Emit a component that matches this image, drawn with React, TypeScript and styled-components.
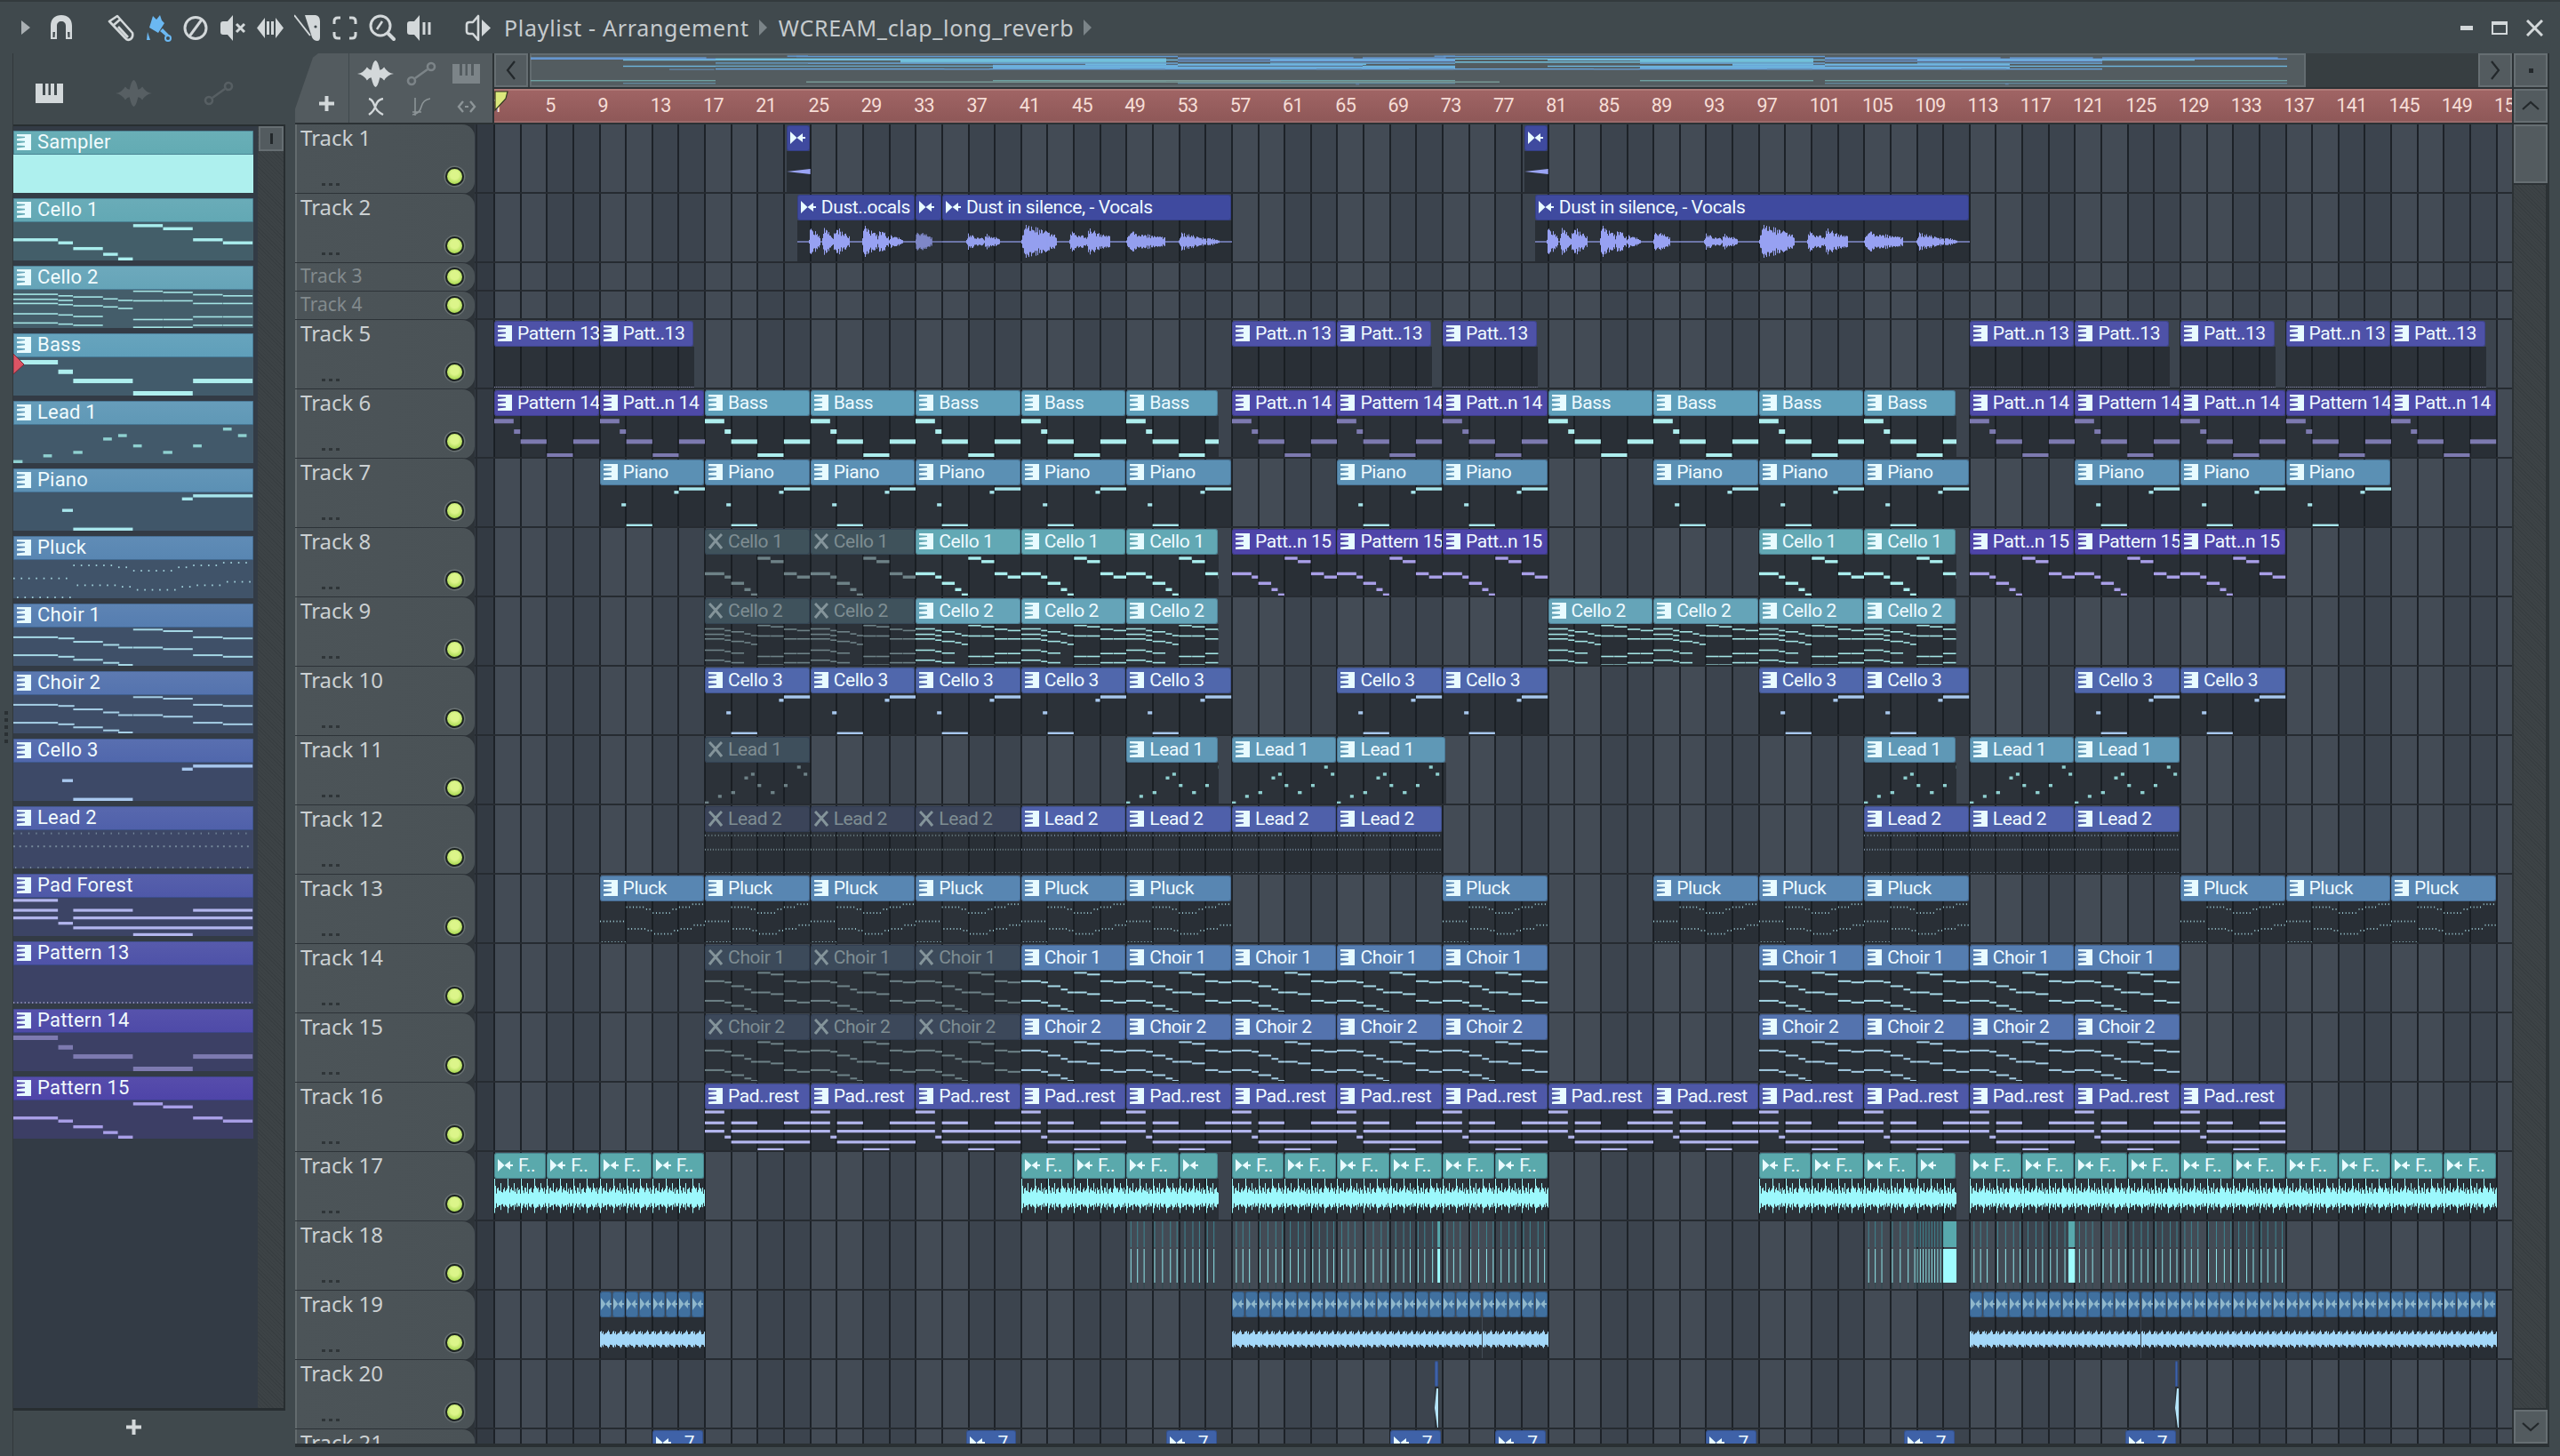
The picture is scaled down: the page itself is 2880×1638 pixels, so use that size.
import React from "react";
import styled, { createGlobalStyle } from "styled-components";

const BAR = 14.82;
const LANE_PAD = 22;
const barX = (i: number) => LANE_PAD + i * BAR;

type Note = [number, number, number];
type Pattern = { h: number; color: string; notes: Note[] };

const dots = (from: number, to: number, y: number, step = 0.25, w = 0.06): Note[] => {
  const out: Note[] = [];
  for (let x = from; x < to - 0.001; x += step) out.push([x, w, y]);
  return out;
};

const choir: Note[] = [
  [0, 1.5, 0.23], [1.5, 0.55, 0.26], [2, 1, 0.35], [3, 0.55, 0.43], [3.5, 0.5, 0.5], [4, 1, 0.03], [5, 1, 0.07], [6, 1, 0.23], [7, 1, 0.26],
  [0, 1.5, 0.7], [1.5, 0.55, 0.74], [2, 1, 0.82], [3, 0.55, 0.9], [3.5, 0.5, 0.98], [4, 1, 0.5], [5, 1, 0.54], [6, 1, 0.7], [7, 1, 0.74],
];
const cello1: Note[] = [
  [0, 1.5, 0.42], [1.5, 0.5, 0.5], [2, 1, 0.65], [3, 0.5, 0.8], [3.5, 0.5, 0.95], [4, 1, 0.05], [5, 1, 0.13], [6, 1, 0.42], [7, 1, 0.5],
];
const bass: Note[] = [[0, 1.5, 0.07], [1.5, 0.5, 0.32], [2, 2, 0.56], [4, 2, 0.93], [6, 2, 0.56]];
const keys: Note[] = [[1.63, 0.37, 0.43], [2, 2, 0.95], [5.63, 0.37, 0.13], [6, 2, 0.05]];

const PATTERNS: Record<string, Pattern> = {
  Sampler: { h: 0, color: "#aeeeee", notes: [] },
  "Cello 1": { h: 3.4, color: "#aaeeee", notes: cello1 },
  "Cello 2": {
    h: 1.6,
    color: "#a4e4e4",
    notes: [
      [0, 1.5, 0.1], [0, 1.5, 0.23], [0, 1.5, 0.34], [0, 1.5, 0.61], [0, 1.5, 0.85],
      [1.5, 0.5, 0.14], [1.5, 0.5, 0.26], [1.5, 0.5, 0.37], [1.5, 0.5, 0.64], [1.5, 0.5, 0.88],
      [2, 1, 0.17], [2, 1, 0.4], [2, 1, 0.68], [2, 1, 0.91],
      [3, 0.5, 0.22], [3, 0.5, 0.43], [3.5, 0.5, 0.26], [3.5, 0.5, 0.47],
      [4, 1, 0.02], [4, 1, 0.27], [4, 1, 0.76], [4, 1, 0.98],
      [5, 1, 0.05], [5, 1, 0.27], [5, 1, 0.76], [5, 1, 0.98],
      [6, 1, 0.11], [6, 1, 0.34], [6, 1, 0.69], [6, 1, 0.91],
      [7, 1, 0.14], [7, 1, 0.34], [7, 1, 0.69], [7, 1, 0.91],
    ],
  },
  Bass: { h: 5, color: "#aeeeee", notes: bass },
  "Lead 1": {
    h: 3.4,
    color: "#8fd0d0",
    notes: [
      [0, 0.32, 0.94], [1, 0.3, 0.77], [2, 0.32, 0.68], [3, 0.3, 0.33], [3.5, 0.3, 0.24], [4, 0.3, 0.51], [5, 0.32, 0.68], [6, 0.3, 0.51], [7, 0.3, 0.07], [7.5, 0.3, 0.24],
    ],
  },
  Piano: { h: 3.4, color: "#a8e6ec", notes: keys },
  Pluck: {
    h: 1.8,
    color: "#a3d2dc",
    notes: [
      ...dots(0, 1.9, 0.46), ...dots(0.12, 2, 0.96),
      ...dots(2, 3.4, 0.12), ...dots(3.5, 4, 0.17), ...dots(4, 5.3, 0.26), ...dots(5.5, 6, 0.17), ...dots(6, 6.9, 0.12), ...dots(7, 7.9, 0.05),
      ...dots(2.12, 3.5, 0.64), ...dots(3.62, 4.1, 0.68), ...dots(4.12, 5.5, 0.76), ...dots(5.62, 6.1, 0.68), ...dots(6.12, 7, 0.64), ...dots(7.12, 8, 0.55),
    ],
  },
  "Choir 1": { h: 2, color: "#a6d8e6", notes: choir },
  "Choir 2": { h: 2, color: "#a6cfe6", notes: choir },
  "Cello 3": { h: 3.4, color: "#a8c8ee", notes: keys },
  "Lead 2": {
    h: 2,
    color: "#75889a",
    notes: [...dots(0, 8, 0.06, 0.25, 0.05), ...dots(0, 8, 0.4, 0.2, 0.07), ...dots(0.06, 8, 0.96, 0.25, 0.05)],
  },
  "Pad Forest": {
    h: 3.2,
    color: "#b3b6ee",
    notes: [
      [0, 1.5, 0.03], [0, 1.5, 0.29], [2, 2, 0.29], [6, 2, 0.29], [0, 1.5, 0.49], [2, 6, 0.49], [1.5, 0.5, 0.63], [2, 6, 0.75], [4, 2, 0.95],
    ],
  },
  "Pattern 13": { h: 2, color: "#8f90b4", notes: dots(0, 8, 0.97, 0.125, 0.05) },
  "Pattern 14": { h: 5, color: "#7d7ab0", notes: bass },
  "Pattern 15": { h: 3.4, color: "#a99fe8", notes: cello1 },
};

const CHANNELS: [string, string][] = [
  ["Sampler", "#62abb3"],
  ["Cello 1", "#62a8b4"],
  ["Cello 2", "#65a4b8"],
  ["Bass", "#5f9fba"],
  ["Lead 1", "#5f98b6"],
  ["Piano", "#5b90b4"],
  ["Pluck", "#5886b2"],
  ["Choir 1", "#557db0"],
  ["Choir 2", "#5473ae"],
  ["Cello 3", "#5067ac"],
  ["Lead 2", "#4f60aa"],
  ["Pad Forest", "#4e58a8"],
  ["Pattern 13", "#4e52a8"],
  ["Pattern 14", "#4e4aa8"],
  ["Pattern 15", "#4e44a8"],
];
const colorOf = (name: string) => CHANNELS.find((c) => c[0] === name)?.[1] ?? "#4e52a8";

const mix = (a: string, b: string, t: number) => {
  const pa = [1, 3, 5].map((i) => parseInt(a.slice(i, i + 2), 16));
  const pb = [1, 3, 5].map((i) => parseInt(b.slice(i, i + 2), 16));
  return `rgb(${pa.map((v, i) => Math.round(v + (pb[i] - v) * t)).join(",")})`;
};

type Kind = "pattern" | "dust" | "blip" | "fx" | "hat" | "tick" | "seven";
type ClipData = { start: number; len: number; label: string; color: string; pattern?: string; muted?: boolean; kind: Kind };
type Spot = number | [number, number];

const row = (label: string, pattern: string, spots: Spot[], muted = false): ClipData[] =>
  spots.map((s) => ({
    start: Array.isArray(s) ? s[0] : s,
    len: Array.isArray(s) ? s[1] : 8,
    label,
    pattern,
    color: colorOf(pattern),
    muted,
    kind: "pattern" as Kind,
  }));

const audio = (kind: Kind, label: string, color: string, spots: [number, number][]): ClipData[] =>
  spots.map(([start, len]) => ({ start, len, label, color, kind }));

const span = (from: number, n: number, step: number, len = step): [number, number][] =>
  Array.from({ length: n }, (_, i) => [from + i * step, len] as [number, number]);

const AUDIO_BLUE = "#3f4a9f";
const FX = "#5aa9ac";

type Track = { name: string; small?: boolean; clips: ClipData[]; hits?: boolean };

const t = (n: number, clips: ClipData[] = [], extra: Partial<Track> = {}): Track => ({ name: `Track ${n}`, clips, ...extra });

const TRACKS: Track[] = [
  t(1, audio("blip", "", AUDIO_BLUE, [[22.2, 1.8], [78.2, 1.8]])),
  t(2, [
    { start: 23, len: 9, label: "Dust..ocals", color: AUDIO_BLUE, kind: "dust" },
    { start: 32, len: 2, label: "", color: AUDIO_BLUE, kind: "dust" },
    { start: 34, len: 22, label: "Dust in silence, - Vocals", color: AUDIO_BLUE, kind: "dust" },
    { start: 79, len: 33, label: "Dust in silence, - Vocals", color: AUDIO_BLUE, kind: "dust" },
  ]),
  t(3, [], { small: true }),
  t(4, [], { small: true }),
  t(5, [
    ...row("Pattern 13", "Pattern 13", [0]),
    ...row("Patt..13", "Pattern 13", [[8, 7.2]]),
    ...row("Patt..n 13", "Pattern 13", [56]),
    ...row("Patt..13", "Pattern 13", [[64, 7.2], [72, 7.2]]),
    ...row("Patt..n 13", "Pattern 13", [112]),
    ...row("Patt..13", "Pattern 13", [[120, 7.2], [128, 7.2]]),
    ...row("Patt..n 13", "Pattern 13", [136]),
    ...row("Patt..13", "Pattern 13", [[144, 7.2]]),
  ]),
  t(6, [
    ...row("Pattern 14", "Pattern 14", [0]),
    ...row("Patt..n 14", "Pattern 14", [8]),
    ...row("Bass", "Bass", [16, 24, 32, 40, [48, 7]]),
    ...row("Patt..n 14", "Pattern 14", [56]),
    ...row("Pattern 14", "Pattern 14", [64]),
    ...row("Patt..n 14", "Pattern 14", [72]),
    ...row("Bass", "Bass", [80, 88, 96, [104, 7]]),
    ...row("Patt..n 14", "Pattern 14", [112]),
    ...row("Pattern 14", "Pattern 14", [120]),
    ...row("Patt..n 14", "Pattern 14", [128]),
    ...row("Pattern 14", "Pattern 14", [136]),
    ...row("Patt..n 14", "Pattern 14", [144]),
  ]),
  t(7, row("Piano", "Piano", [8, 16, 24, 32, 40, 48, 64, 72, 88, 96, 104, 120, 128, 136])),
  t(8, [
    ...row("Cello 1", "Cello 1", [16, 24], true),
    ...row("Cello 1", "Cello 1", [32, 40, [48, 7]]),
    ...row("Patt..n 15", "Pattern 15", [56]),
    ...row("Pattern 15", "Pattern 15", [64]),
    ...row("Patt..n 15", "Pattern 15", [72]),
    ...row("Cello 1", "Cello 1", [96, [104, 7]]),
    ...row("Patt..n 15", "Pattern 15", [112]),
    ...row("Pattern 15", "Pattern 15", [120]),
    ...row("Patt..n 15", "Pattern 15", [128]),
  ]),
  t(9, [
    ...row("Cello 2", "Cello 2", [16, 24], true),
    ...row("Cello 2", "Cello 2", [32, 40, [48, 7], 80, 88, 96, [104, 7]]),
  ]),
  t(10, row("Cello 3", "Cello 3", [16, 24, 32, 40, 48, 64, 72, 96, 104, 120, 128])),
  t(11, [
    ...row("Lead 1", "Lead 1", [16], true),
    ...row("Lead 1", "Lead 1", [[48, 7], 56, [64, 8.3], [104, 7], 112, 120]),
  ]),
  t(12, [
    ...row("Lead 2", "Lead 2", [16, 24, 32], true),
    ...row("Lead 2", "Lead 2", [40, 48, 56, 64, 104, 112, 120]),
  ]),
  t(13, row("Pluck", "Pluck", [8, 16, 24, 32, 40, 48, 72, 88, 96, 104, 128, 136, 144])),
  t(14, [
    ...row("Choir 1", "Choir 1", [16, 24, 32], true),
    ...row("Choir 1", "Choir 1", [40, 48, 56, 64, 72, 96, 104, 112, 120]),
  ]),
  t(15, [
    ...row("Choir 2", "Choir 2", [16, 24, 32], true),
    ...row("Choir 2", "Choir 2", [40, 48, 56, 64, 72, 96, 104, 112, 120]),
  ]),
  t(16, row("Pad..rest", "Pad Forest", span(16, 15, 8).map((s) => s[0]))),
  t(17, [
    ...audio("fx", "F..", FX, span(0, 4, 4)),
    ...audio("fx", "F..", FX, span(40, 3, 4)),
    ...audio("fx", "", FX, [[52, 3]]),
    ...audio("fx", "F..", FX, span(56, 6, 4)),
    ...audio("fx", "F..", FX, span(96, 3, 4)),
    ...audio("fx", "", FX, [[108, 3]]),
    ...audio("fx", "F..", FX, span(112, 10, 4)),
  ]),
  t(18, [], { hits: true }),
  t(19, [
    ...audio("hat", "", "#40709f", span(8, 8, 1)),
    ...audio("hat", "", "#40709f", span(56, 24, 1)),
    ...audio("hat", "", "#40709f", span(112, 40, 1)),
  ]),
  t(20, audio("tick", "", "#3f62a8", [[71.4, 0.3], [127.6, 0.3]])),
  t(21, audio("seven", "7", "#3f62a8", [[12, 3.9], [35.8, 3.9], [51, 3.9], [68, 3.9], [76, 3.9], [92, 3.9], [107, 3.9], [123.8, 3.9]])),
];

// waveforms are generated once per shape and reused
const rand = (seed: number) => () => (seed = (seed * 16807) % 2147483647) / 2147483647;

const bands = (w: number, seed: number, fn: (x: number, r: number) => [number, number]) => {
  const r = rand(seed);
  r();
  let d = "";
  for (let x = 0; x < w; x += 1) {
    const [up, down] = fn(x, r());
    d += `M${x + 0.5} ${(-up).toFixed(1)}V${down.toFixed(1)}`;
  }
  return d;
};

const BLOBS: [number, number, number][] = [
  [13, 26, 17], [28, 40, 18], [40, 59, 17], [73, 90, 19], [90, 103, 15], [103, 119, 8], [133, 152, 13], [190, 210, 9], [210, 228, 9], [252, 292, 20], [306, 325, 13], [325, 352, 15], [370, 414, 12], [429, 460, 10], [460, 475, 5],
];
const dustWave = bands(489, 77, (x, r) => {
  const b = BLOBS.find((s) => x >= s[0] && x < s[1]);
  if (!b) return [0.6, 0.6];
  const p = (x - b[0]) / (b[1] - b[0]);
  const a = b[2] * Math.min(1, p * 8 + 0.2) * (1 - p * 0.65) * (0.55 + r * 0.6);
  return [a, a * 0.95];
});
const fxWave = bands(60, 11, (x, r) => {
  const m = x % 15;
  const spike = m === 0 ? 23 : m === 1 ? 15 : m === 7 ? 18 : m === 4 || m === 11 ? 13 : 0;
  const core = 6 + r * 7;
  return [Math.max(core, spike), Math.max(core * 0.75, spike * 0.68)];
});
const hatWave = bands(16, 5, (_x, r) => [5 + r * 6, 5 + r * 5]);

const GlobalStyle = createGlobalStyle`
  html, body { margin: 0; padding: 0; background: #40494d; }
  body { font-family: "Noto Sans", sans-serif; overflow: hidden; }
`;

const Page = styled.div`
  width: 2880px;
  height: 1638px;
  display: flex;
  flex-direction: column;
  background: #40494d;
  border-top: 2px solid #333a3d;
  box-sizing: border-box;
  overflow: hidden;
`;

const Toolbar = styled.div`
  height: 58px;
  flex: none;
  display: flex;
  align-items: center;
  padding-left: 22px;
  color: #d3d8da;
`;

const ToolGroup = styled.div<{ $ml: number }>`
  display: flex;
  align-items: center;
  gap: 12px;
  margin-left: ${(p) => p.$ml}px;
`;

const Tool = styled.svg`
  width: 30px;
  height: 31px;
  flex: none;
  display: block;
`;

const Title = styled.span`
  color: #c6cbce;
  font-size: 25px;
  letter-spacing: 0.7px;
  white-space: nowrap;
`;

const TitleArrow = styled.span`
  width: 0;
  height: 0;
  margin: 0 13px 0 11px;
  border-left: 9px solid #7b8488;
  border-top: 9px solid transparent;
  border-bottom: 9px solid transparent;
`;

const WindowButtons = styled.div`
  margin-left: auto;
  margin-right: 19px;
  display: flex;
  align-items: center;
  gap: 21px;
`;

const Body = styled.div`
  flex: 1;
  display: flex;
  min-height: 0;
  padding-bottom: 10px;
`;

const Strip = styled.div`
  width: 15px;
  flex: none;
  border-right: 1px solid #31383b;
  margin-bottom: -10px;
  display: flex;
  flex-direction: column;
  align-items: center;
  justify-content: center;
  gap: 4px;
  padding-bottom: 62px;
  box-sizing: border-box;
`;

const StripDot = styled.i`
  width: 4px;
  height: 4px;
  background: #2a3033;
`;

const ChannelCol = styled.div`
  width: 306px;
  flex: none;
  display: flex;
  flex-direction: column;
  margin-bottom: -10px;
`;

const ChannelTabs = styled.div`
  height: 80px;
  flex: none;
  display: flex;
  align-items: center;
  justify-content: space-between;
  padding: 20px 58px 10px 25px;
  box-sizing: border-box;
`;

const ListFrame = styled.div`
  height: 1447px;
  flex: none;
  display: flex;
  background: #333b45;
  border-top: 2px solid #282e31;
  border-bottom: 3px solid #282e31;
  border-right: 2px solid #282e31;
  box-sizing: border-box;
`;

const List = styled.div`
  width: 275px;
  flex: none;
  padding-top: 5px;
  position: relative;
`;

const Channel = styled.div`
  width: 270px;
  height: 70px;
  margin-bottom: 6px;
  display: flex;
  flex-direction: column;
`;

const ChannelHead = styled.div<{ $c: string }>`
  height: 27px;
  flex: none;
  display: flex;
  align-items: center;
  gap: 7px;
  padding: 0 0 2px 4px;
  box-sizing: border-box;
  color: #f1fbfd;
  font-family: Roboto, sans-serif;
  font-size: 22px;
  letter-spacing: 0.2px;
  background: linear-gradient(${(p) => mix(p.$c, "#ffffff", 0.05)}, ${(p) => p.$c});
  box-shadow: inset 0 0 0 1px rgba(30, 60, 90, 0.35);
  border-radius: 1px;
`;

const ChannelBody = styled.div<{ $c: string; $solid?: boolean }>`
  flex: 1;
  position: relative;
  background: ${(p) => (p.$solid ? "#aef0ee" : mix(p.$c, "#343b46", 0.68))};
  overflow: hidden;
`;

const PlayMark = styled.svg`
  position: absolute;
  left: 0;
  top: 256px;
  width: 13px;
  height: 24px;
`;

const Gutter = styled.div`
  flex: 1;
  display: flex;
  flex-direction: column;
  background: repeating-linear-gradient(45deg, #383e41 0 1px, #3d4346 1px 3px);
  padding-left: 1px;
`;

const NavButton = styled.div<{ $w?: number; $h?: number }>`
  width: ${(p) => p.$w ?? 38}px;
  height: ${(p) => p.$h ?? 38}px;
  flex: none;
  display: flex;
  align-items: center;
  justify-content: center;
  background: #535b5f;
  border: 2px solid #666e72;
  box-sizing: border-box;
`;

const AddRow = styled.div`
  flex: 1;
  display: flex;
  justify-content: center;
  padding: 10px 0 0 0;
  margin-right: 36px;
`;

const Arrange = styled.div`
  width: 2494px;
  flex: none;
  margin-left: 11px;
  display: flex;
  flex-direction: column;
  overflow: hidden;
  border-bottom: 4px solid #2a3033;
`;

const ArrangeHead = styled.div`
  height: 80px;
  flex: none;
  display: flex;
  background: #2c3235;
  border-bottom: 2px solid #2c3235;
  box-sizing: border-box;
`;

const CornerSlot = styled.div`
  width: 61px;
  flex: none;
  background: #40494d;
  display: flex;
`;

const CornerTab = styled.div`
  flex: 1;
  background: #535b5f;
  margin-right: 1px;
  clip-path: polygon(0 100%, 0 80%, 20px 6%, 26px 0, 100% 0, 100% 100%);
  display: flex;
  align-items: flex-end;
  justify-content: flex-end;
  padding: 0 16px 13px 0;
`;

const ToolBox = styled.div`
  width: 161px;
  flex: none;
  display: grid;
  grid-template-columns: repeat(3, 1fr);
  align-items: center;
  justify-items: center;
  background: #535b5f;
  padding: 2px 4px;
  box-sizing: border-box;
`;

const HeadRight = styled.div`
  flex: 1;
  margin-left: 2px;
  display: flex;
  flex-direction: column;
  gap: 2px;
  min-width: 0;
`;

const NavRow = styled.div`
  height: 38px;
  flex: none;
  display: flex;
  gap: 2px;
  background: #373e41;
`;

const Overview = styled.svg`
  width: 1998px;
  height: 38px;
  flex: none;
  display: block;
  background: #535c60;
  box-shadow: inset 0 0 0 2px #636c70;
`;

const NavFill = styled.div`
  flex: 1;
`;

const Ruler = styled.div`
  height: 38px;
  flex: none;
  display: flex;
  position: relative;
  overflow: hidden;
  background: linear-gradient(#a06464, #8f5858);
  border-top: 2px solid #b07a78;
  border-bottom: 2px solid #9c6a6a;
  box-sizing: border-box;
`;

const RulerCell = styled.div`
  width: 59.28px;
  flex: none;
  box-sizing: border-box;
  color: #f6ddd6;
  font-family: Roboto, sans-serif;
  font-size: 21.5px;
  letter-spacing: -0.6px;
  line-height: 34px;
  &:first-child {
    margin-left: -2px;
  }
`;

const Marker = styled.svg`
  position: absolute;
  left: 0;
  top: 0;
  width: 16px;
  height: 24px;
`;

const Rows = styled.div`
  flex: 1;
  display: flex;
  flex-direction: column;
  min-height: 0;
  overflow: hidden;
`;

const TrackRow = styled.div<{ $small?: boolean }>`
  height: ${(p) => (p.$small ? 32 : 78)}px;
  flex: none;
  display: flex;
`;

const HeadWrap = styled.div`
  width: 202px;
  flex: none;
  background: #2d3338;
`;

const TrackHead = styled.div<{ $small?: boolean }>`
  height: 100%;
  position: relative;
  box-sizing: border-box;
  padding-left: 4px;
  color: ${(p) => (p.$small ? "#828a8d" : "#cbd0d2")};
  font-size: ${(p) => (p.$small ? 21 : 24)}px;
  line-height: ${(p) => (p.$small ? 29 : 30)}px;
  background: linear-gradient(90deg, #4c5458, #4a5256);
  border-left: 2px solid #636b6e;
  border-radius: 0 14px 14px 0;
  box-shadow: 0 0 0 1px #2d3338;
`;

const Dots = styled.div`
  position: absolute;
  left: 28px;
  bottom: 9px;
  display: flex;
  gap: 4px;
`;

const Dot = styled.i`
  width: 4px;
  height: 3px;
  background: #2f3538;
`;

const Led = styled.div<{ $small?: boolean }>`
  position: absolute;
  right: 12px;
  top: ${(p) => (p.$small ? 5 : 48)}px;
  width: 21px;
  height: 21px;
  box-sizing: border-box;
  border-radius: 50%;
  border: 2px solid #1c2320;
  background: radial-gradient(circle at 50% 40%, #dcf58a 0 35%, #8cc832 100%);
  box-shadow: 0 0 0 1.5px #6a7274;
`;

const Lane = styled.div`
  flex: 1;
  position: relative;
  min-width: 0;
  border-bottom: 2px solid #262b31;
  box-sizing: border-box;
  background-color: #333a43;
  background-image:
    repeating-linear-gradient(90deg, #1d2228 0 2px, transparent 2px ${BAR * 2}px),
    repeating-linear-gradient(90deg, #434b55 0 ${BAR * 4}px, #3c444e ${BAR * 4}px ${BAR * 8}px);
  background-position: ${LANE_PAD - 1}px 0, ${LANE_PAD}px 0;
  background-repeat: no-repeat;
`;

const EdgeLine = styled.i`
  position: absolute;
  left: 1px;
  top: 0;
  bottom: 0;
  width: 2px;
  background: #262b31;
`;

const Clip = styled.div`
  position: absolute;
  top: 1px;
  bottom: 0;
  display: flex;
  flex-direction: column;
`;

const ClipHead = styled.div<{ $c: string; $muted?: boolean; $tiny?: boolean }>`
  height: 29px;
  flex: none;
  margin-right: 1px;
  display: flex;
  align-items: center;
  gap: ${(p) => (p.$tiny ? 0 : 6)}px;
  padding: 0 0 2px ${(p) => (p.$tiny ? 1 : 4)}px;
  box-sizing: border-box;
  overflow: hidden;
  white-space: nowrap;
  border-radius: 3px;
  font-family: Roboto, sans-serif;
  font-size: 21px;
  letter-spacing: -0.4px;
  color: ${(p) => (p.$muted ? "#7e8d92" : "#eefaff")};
  background: ${(p) => (p.$muted ? mix(p.$c, "#363d45", 0.8) : p.$c)};
  box-shadow: inset 0 0 0 1px rgba(20, 30, 60, 0.25);
`;

const ClipBody = styled.div`
  flex: 1;
  position: relative;
  overflow: hidden;
  background: rgba(22, 26, 30, 0.5);
`;

const Drawing = styled.svg`
  position: absolute;
  left: 0;
  top: 0;
  display: block;
`;

const HitsLayer = styled.svg`
  position: absolute;
  left: 0;
  top: 0;
  width: 100%;
  height: 100%;
`;

const SevenText = styled.span`
  margin-left: 9px;
`;

const Rail = styled.div`
  width: 42px;
  flex: none;
  display: flex;
  flex-direction: column;
  gap: 2px;
  padding: 0 2px;
  box-sizing: border-box;
  border-right: 2px solid #2c3235;
  border-bottom: 4px solid #2a3033;
  background: #2c3235;
`;

const RailTrack = styled.div`
  flex: 1;
  background: repeating-linear-gradient(45deg, #383e41 0 1px, #3d4346 1px 3px);
`;

// --- icons ---

const IconSvg = styled.svg`
  flex: none;
  display: block;
`;

const PatternIcon = ({ muted }: { muted?: boolean }) =>
  muted ? (
    <IconSvg width="16" height="18" viewBox="0 0 16 18">
      <path d="M1 1Q8 8 15 17M15 1Q8 8 1 17" stroke="#84949a" strokeWidth="3" fill="none" />
    </IconSvg>
  ) : (
    <IconSvg width="16" height="18" viewBox="0 0 16 18">
      <path fill="#e8fbff" d="M0 0H16V18H0V15.6L9 14.6V13L0 12.4V10.2L9 9.2V7.8L0 7.2V5L9 4V2.8L0 2.2Z" />
    </IconSvg>
  );

const AudioIcon = ({ dim, small }: { dim?: boolean; small?: boolean }) => (
  <IconSvg width={small ? 12 : 17} height="14" viewBox="0 0 17 14" preserveAspectRatio="none">
    <path fill={dim ? "#8fb7cb" : "#e8fbff"} d="M0 0L7.5 7L0 14ZM7.5 7L14 2V12ZM14 6H17V8H14Z" />
  </IconSvg>
);

const ic = "#d3d8da";

const Magnet = () => (
  <Tool viewBox="0 0 30 31">
    <path fill={ic} d="M3 28V13C3 5 8 1 15 1C22 1 27 5 27 13V28H20V13C20 10 18 8 15 8C12 8 10 10 10 13V28Z" />
    <path fill="#40494d" d="M5.5 20H8L7.5 26H5.5ZM22 20H24.5V26H22.5Z" />
  </Tool>
);
const Pencil = () => (
  <Tool viewBox="0 0 30 31">
    <path fill="none" stroke={ic} strokeWidth="2.6" strokeLinejoin="round" d="M2 8L11 2L28 21Q29 26 26 28Q22 30 20 27ZM6 13L14 6M12 14L23 26" />
  </Tool>
);
const Brush = () => (
  <Tool viewBox="0 0 30 31">
    <path fill="#6bb8f2" d="M5 15L9 2L13 6L17 1L19 7L22 10L15 21ZM17 19L20 16L27 23L24 25ZM3 20L6 29L2 29Z" />
    <circle cx="26" cy="27" r="3" fill="none" stroke="#6bb8f2" strokeWidth="2" />
  </Tool>
);
const NoCircle = () => (
  <Tool viewBox="0 0 30 31">
    <circle cx="15" cy="15.5" r="12" fill="none" stroke={ic} strokeWidth="3" />
    <path stroke={ic} strokeWidth="3" d="M8 25L22 6" />
  </Tool>
);
const speakerPath = "M1 11Q1 8 4 8H9L15 1V30L9 23H4Q1 23 1 20Z";
const MuteX = () => (
  <Tool viewBox="0 0 30 31">
    <path fill={ic} d={speakerPath} />
    <path stroke={ic} strokeWidth="3" d="M19 11L28 20M28 11L19 20" />
  </Tool>
);
const Slip = () => (
  <Tool viewBox="0 0 30 31">
    <path fill={ic} d="M0 15.5L9 4V27ZM30 15.5L21 4V27ZM11 8H14V23H11ZM16 8H19V23H16Z" />
  </Tool>
);
const Slice = () => (
  <Tool viewBox="0 0 30 31">
    <path fill={ic} d="M12 1H24Q29 2 29 8V26Q29 30 26 30Q22 30 20 26Z" />
    <path stroke={ic} strokeWidth="2" d="M0 1L18 24" />
    <circle cx="24" cy="14" r="1.6" fill="#40494d" />
  </Tool>
);
const Select = () => (
  <Tool viewBox="0 0 30 31">
    <path fill="none" stroke={ic} strokeWidth="3" d="M10 4H7Q3 4 3 8V11M20 4H23Q27 4 27 8V11M10 27H7Q3 27 3 23V20M20 27H23Q27 27 27 23V20" />
  </Tool>
);
const ZoomGlass = () => (
  <Tool viewBox="0 0 30 31">
    <circle cx="13" cy="13" r="11" fill="none" stroke={ic} strokeWidth="3" />
    <path stroke={ic} strokeWidth="2.5" d="M9 17L15 8" />
    <path stroke={ic} strokeWidth="4" strokeLinecap="round" d="M22 22L28 28" />
  </Tool>
);
const SpeakerBars = () => (
  <Tool viewBox="0 0 30 31">
    <path fill={ic} d={speakerPath} />
    <path stroke={ic} strokeWidth="3" d="M20 9V23M26 9V23" />
  </Tool>
);
const PlaylistSpeaker = () => (
  <Tool viewBox="0 0 30 31">
    <path fill="none" stroke={ic} strokeWidth="2.6" strokeLinejoin="round" d="M2 12Q2 9 5 9H9L15 2V29L9 22H5Q2 22 2 19Z" />
    <path fill={ic} d="M19 6L29 15.5L19 25Z" />
  </Tool>
);

const Piano = ({ color = ic }: { color?: string }) => (
  <IconSvg width="31" height="22" viewBox="0 0 31 22">
    <path fill={color} fillRule="evenodd" d="M0 0H31V22H0ZM8 0V13H11V0ZM14.5 0V13H17V0ZM21 0V13H24V0Z" />
  </IconSvg>
);
const Wave = ({ color = ic }: { color?: string }) => (
  <IconSvg width="41" height="30" viewBox="0 0 34 28" preserveAspectRatio="none">
    <path fill={color} d="M0 14Q6 13 9 7Q11 10 13 10Q15 0 17 0Q19 0 21 10Q23 10 25 7Q28 13 34 14Q28 15 25 21Q23 18 21 18Q19 28 17 28Q15 28 13 18Q11 18 9 21Q6 15 0 14Z" />
  </IconSvg>
);
const Link = ({ color = ic }: { color?: string }) => (
  <IconSvg width="34" height="28" viewBox="0 0 34 28">
    <circle cx="6" cy="22" r="4" fill="none" stroke={color} strokeWidth="2.6" />
    <circle cx="28" cy="6" r="4" fill="none" stroke={color} strokeWidth="2.6" />
    <path stroke={color} strokeWidth="2.6" d="M10 19L24 9" />
  </IconSvg>
);
const Plus = ({ color = ic }: { color?: string }) => (
  <IconSvg width="17" height="17" viewBox="0 0 17 17">
    <path fill={color} d="M6.5 0H10.5V6.5H17V10.5H10.5V17H6.5V10.5H0V6.5H6.5Z" />
  </IconSvg>
);
const CrossCurve = () => (
  <IconSvg width="20" height="20" viewBox="0 0 20 20">
    <path fill="none" stroke={ic} strokeWidth="2.4" d="M2 1Q6 2 8 8Q10 15 18 19M18 1Q12 2 10 8Q8 15 2 19" />
  </IconSvg>
);
const SCurve = () => (
  <IconSvg width="20" height="20" viewBox="0 0 20 20">
    <path fill="none" stroke="#8d9598" strokeWidth="1.6" d="M3 0V20M0 16H10M0 19Q8 18 10 10Q12 2 20 1" />
  </IconSvg>
);
const SwapArrows = () => (
  <IconSvg width="22" height="16" viewBox="0 0 22 16">
    <path fill="none" stroke="#8d9598" strokeWidth="2.4" d="M7 2L2 8L7 14M15 2L20 8L15 14" />
    <path fill="#8d9598" d="M9 7H13V9H9Z" />
  </IconSvg>
);
const Chevron = ({ dir }: { dir: "left" | "right" | "up" | "down" }) => {
  const d = { left: "M11 1L3 11L11 21", right: "M3 1L11 11L3 21", up: "M1 11L10 3L19 11", down: "M1 3L10 11L19 3" }[dir];
  const w = dir === "left" || dir === "right" ? 14 : 20;
  const h = dir === "left" || dir === "right" ? 22 : 14;
  return (
    <IconSvg width={w} height={h} viewBox={`0 0 ${w} ${h}`}>
      <path fill="none" stroke="#23282b" strokeWidth="2.2" d={d} />
    </IconSvg>
  );
};

// --- drawings ---

const NoteSvg = ({ name, w, h, bar, noteColor }: { name: string; w: number; h: number; bar: number; noteColor?: string }) => {
  const p = PATTERNS[name];
  if (!p) return null;
  return (
    <Drawing width={w} height={h} viewBox={`0 0 ${w} ${h}`}>
      {p.notes.map(([x, nw, y], i) => (
        <rect key={i} x={x * bar} y={Math.min(y * h, h - p.h)} width={Math.max(nw * bar - 0.4, 1)} height={p.h} fill={noteColor ?? p.color} />
      ))}
    </Drawing>
  );
};

const WaveSvg = ({ d, w, cy, color, sx = 0 }: { d: string; w: number; cy: number; color: string; sx?: number }) => (
  <Drawing width={w} height={48} viewBox={`${sx} ${-cy} ${w} 48`}>
    <path d={d} stroke={color} strokeWidth={1} fill="none" />
  </Drawing>
);

const clipBody = (c: ClipData, w: number) => {
  if (c.kind === "pattern" && c.pattern) {
    return <NoteSvg name={c.pattern} w={w} h={47} bar={BAR} noteColor={c.muted ? "#6e8287" : undefined} />;
  }
  if (c.kind === "dust") {
    return <WaveSvg d={dustWave} w={w} cy={24} color="#9aa4f5" sx={(c.start === 79 ? 0 : c.start - 23) * BAR} />;
  }
  if (c.kind === "blip") {
    return (
      <Drawing width={w} height={48} viewBox={`0 0 ${w} 48`}>
        <path fill="#9aa4f5" d={`M0 23L${w} 20V26Z`} />
      </Drawing>
    );
  }
  if (c.kind === "fx") return <WaveSvg d={fxWave} w={w} cy={23} color="#9ffcff" />;
  if (c.kind === "hat") return <WaveSvg d={hatWave} w={w} cy={25} color="#a6dbfb" />;
  if (c.kind === "tick") {
    return (
      <Drawing width={6} height={48} viewBox="0 0 6 48">
        <path fill="#b4e4fa" d="M2 2L4 2V46L3 46L0 24Z" />
      </Drawing>
    );
  }
  return null;
};

const HIT_OFFSETS = [0.3, 0.8, 1.3, 2.1, 2.7, 3.3, 3.8, 4.4, 5, 5.5, 6.1, 6.6, 7.2, 7.7];

const Hits = () => {
  const lines: number[] = [];
  const add = (from: number, to: number) => {
    for (let b = from; b < to; b += 8) for (const o of HIT_OFFSETS) if (b + o < to) lines.push(b + o);
  };
  add(48, 55);
  add(56, 80);
  add(104, 108);
  add(112, 136);
  for (let b = 108; b < 110; b += 0.22) lines.push(b);
  const solid: [number, number][] = [[110, 111], [119.5, 120], [71.6, 71.8]];
  return (
    <HitsLayer>
      {lines.map((b, i) => (
        <g key={i}>
          <rect x={barX(b)} y={0} width={1} height={29} fill="#3f8590" />
          <rect x={barX(b)} y={31} width={1} height={38} fill="#8fe6ea" />
          <rect x={barX(b)} y={69} width={1} height={7} fill="#2f4a50" />
        </g>
      ))}
      {solid.map(([a, b], i) => (
        <g key={i}>
          <rect x={barX(a)} y={0} width={(b - a) * BAR} height={29} fill="#58a9ad" />
          <rect x={barX(a)} y={31} width={(b - a) * BAR} height={38} fill="#9ffcff" />
        </g>
      ))}
    </HitsLayer>
  );
};

const OVERVIEW_Y = [2.5, 2.8, 0, 0, 4.4, 5.6, 6.8, 8, 9.2, 10.4, 11.6, 12.8, 13.8, 14.8, 15.8, 17, 30, 31.5, 33, 34, 17.5];

const OverviewMap = () => (
  <Overview viewBox="0 0 1998 38">
    {TRACKS.flatMap((tr, ti) =>
      tr.clips.map((c, i) => (
        <rect
          key={`${ti}-${i}`}
          x={1 + c.start * 13}
          y={OVERVIEW_Y[ti]}
          width={c.len * 13}
          height={1.4}
          fill={ti >= 16 ? mix(c.color, "#7f9a98", 0.55) : c.muted ? "#54666c" : mix(c.color, "#7fdcff", 0.55)}
        />
      ))
    )}
    <rect x={585} y={30} width={260} height={1.4} fill="#7b9c98" />
    <rect x={311} y={31.5} width={780} height={1.4} fill="#7b9c98" />
  </Overview>
);

const ClipView = ({ clip }: { clip: ClipData }) => {
  const w = clip.len * BAR;
  return (
    <Clip style={{ left: barX(clip.start), width: w }}>
      <ClipHead $c={clip.color} $muted={clip.muted} $tiny={clip.kind === "hat" || clip.kind === "tick"}>
        {clip.kind === "pattern" ? <PatternIcon muted={clip.muted} /> : clip.kind === "tick" ? null : <AudioIcon dim={clip.kind === "hat"} small={clip.kind === "hat"} />}
        {clip.kind === "seven" ? <SevenText>{clip.label}</SevenText> : clip.label && <span>{clip.label}</span>}
      </ClipHead>
      <ClipBody>{clipBody(clip, w)}</ClipBody>
    </Clip>
  );
};

const RULER_LABELS = Array.from({ length: 39 }, (_, i) => 1 + i * 4);

export default function App() {
  return (
    <Page>
      <GlobalStyle />
      <Toolbar>
        <IconSvg width="14" height="22" viewBox="0 0 14 22">
          <path fill="#aab0b3" d="M2 3L12 11L2 19Z" />
        </IconSvg>
        <ToolGroup $ml={18}>
          <Magnet />
        </ToolGroup>
        <ToolGroup $ml={37}>
          <Pencil />
          <Brush />
          <NoCircle />
          <MuteX />
          <Slip />
          <Slice />
          <Select />
          <ZoomGlass />
          <SpeakerBars />
        </ToolGroup>
        <ToolGroup $ml={36}>
          <PlaylistSpeaker />
        </ToolGroup>
        <Title style={{ marginLeft: 14 }}>Playlist - Arrangement</Title>
        <TitleArrow />
        <Title>WCREAM_clap_long_reverb</Title>
        <TitleArrow />
        <WindowButtons>
          <IconSvg width="14" height="5" viewBox="0 0 14 5">
            <rect width="14" height="5" fill={ic} />
          </IconSvg>
          <IconSvg width="18" height="15" viewBox="0 0 18 15">
            <path fill="none" stroke={ic} strokeWidth="2" d="M1 1.5H17V14H1Z" />
            <rect x="0" y="0" width="18" height="4" fill={ic} />
          </IconSvg>
          <IconSvg width="19" height="19" viewBox="0 0 19 19">
            <path stroke={ic} strokeWidth="3" d="M1 1L18 18M18 1L1 18" />
          </IconSvg>
        </WindowButtons>
      </Toolbar>
      <Body>
        <Strip>
          {[0, 1, 2, 3, 4].map((i) => (
            <StripDot key={i} />
          ))}
        </Strip>
        <ChannelCol>
          <ChannelTabs>
            <Piano />
            <Wave color="#575f63" />
            <Link color="#575f63" />
          </ChannelTabs>
          <ListFrame>
            <List>
              {CHANNELS.map(([name, c]) => (
                <Channel key={name}>
                  <ChannelHead $c={c}>
                    <PatternIcon />
                    {name}
                  </ChannelHead>
                  <ChannelBody $c={c} $solid={name === "Sampler"}>
                    <NoteSvg name={name} w={270} h={43} bar={33.7} />
                  </ChannelBody>
                </Channel>
              ))}
              <PlayMark viewBox="0 0 13 24">
                <path fill="#dc5464" stroke="#7a2a38" d="M0 0L12 12L0 23Z" />
              </PlayMark>
            </List>
            <Gutter>
              <NavButton $w={28} $h={28}>
                <IconSvg width="3" height="12" viewBox="0 0 3 12">
                  <rect width="3" height="12" fill="#23282b" />
                </IconSvg>
              </NavButton>
            </Gutter>
          </ListFrame>
          <AddRow>
            <Plus />
          </AddRow>
        </ChannelCol>
        <Arrange>
          <ArrangeHead>
            <CornerSlot>
              <CornerTab>
                <Plus />
              </CornerTab>
            </CornerSlot>
            <ToolBox>
              <Wave />
              <Link color="#7c8488" />
              <Piano color="#7c8488" />
              <CrossCurve />
              <SCurve />
              <SwapArrows />
            </ToolBox>
            <HeadRight>
              <NavRow>
                <NavButton>
                  <Chevron dir="left" />
                </NavButton>
                <OverviewMap />
                <NavFill />
                <NavButton>
                  <Chevron dir="right" />
                </NavButton>
              </NavRow>
              <Ruler>
                {RULER_LABELS.map((n) => (
                  <RulerCell key={n}>{n}</RulerCell>
                ))}
                <Marker viewBox="0 0 16 24">
                  <path fill="#dbe87c" stroke="#2f3a20" strokeWidth="1.2" d="M1 1H15L13 9L1 22Z" />
                </Marker>
              </Ruler>
            </HeadRight>
          </ArrangeHead>
          <Rows>
            {TRACKS.map((tr) => (
              <TrackRow key={tr.name} $small={tr.small}>
                <HeadWrap>
                  <TrackHead $small={tr.small}>
                    {tr.name}
                    {!tr.small && (
                      <Dots>
                        <Dot />
                        <Dot />
                        <Dot />
                      </Dots>
                    )}
                    <Led $small={tr.small} />
                  </TrackHead>
                </HeadWrap>
                <Lane>
                  <EdgeLine />
                  {tr.hits && <Hits />}
                  {tr.clips.map((c, i) => (
                    <ClipView key={i} clip={c} />
                  ))}
                </Lane>
              </TrackRow>
            ))}
          </Rows>
        </Arrange>
        <Rail>
          <NavButton>
            <IconSvg width="5" height="5" viewBox="0 0 5 5">
              <rect width="5" height="5" fill="#23282b" />
            </IconSvg>
          </NavButton>
          <NavButton>
            <Chevron dir="up" />
          </NavButton>
          <NavButton $h={66} />
          <RailTrack />
          <NavButton>
            <Chevron dir="down" />
          </NavButton>
        </Rail>
      </Body>
    </Page>
  );
}
